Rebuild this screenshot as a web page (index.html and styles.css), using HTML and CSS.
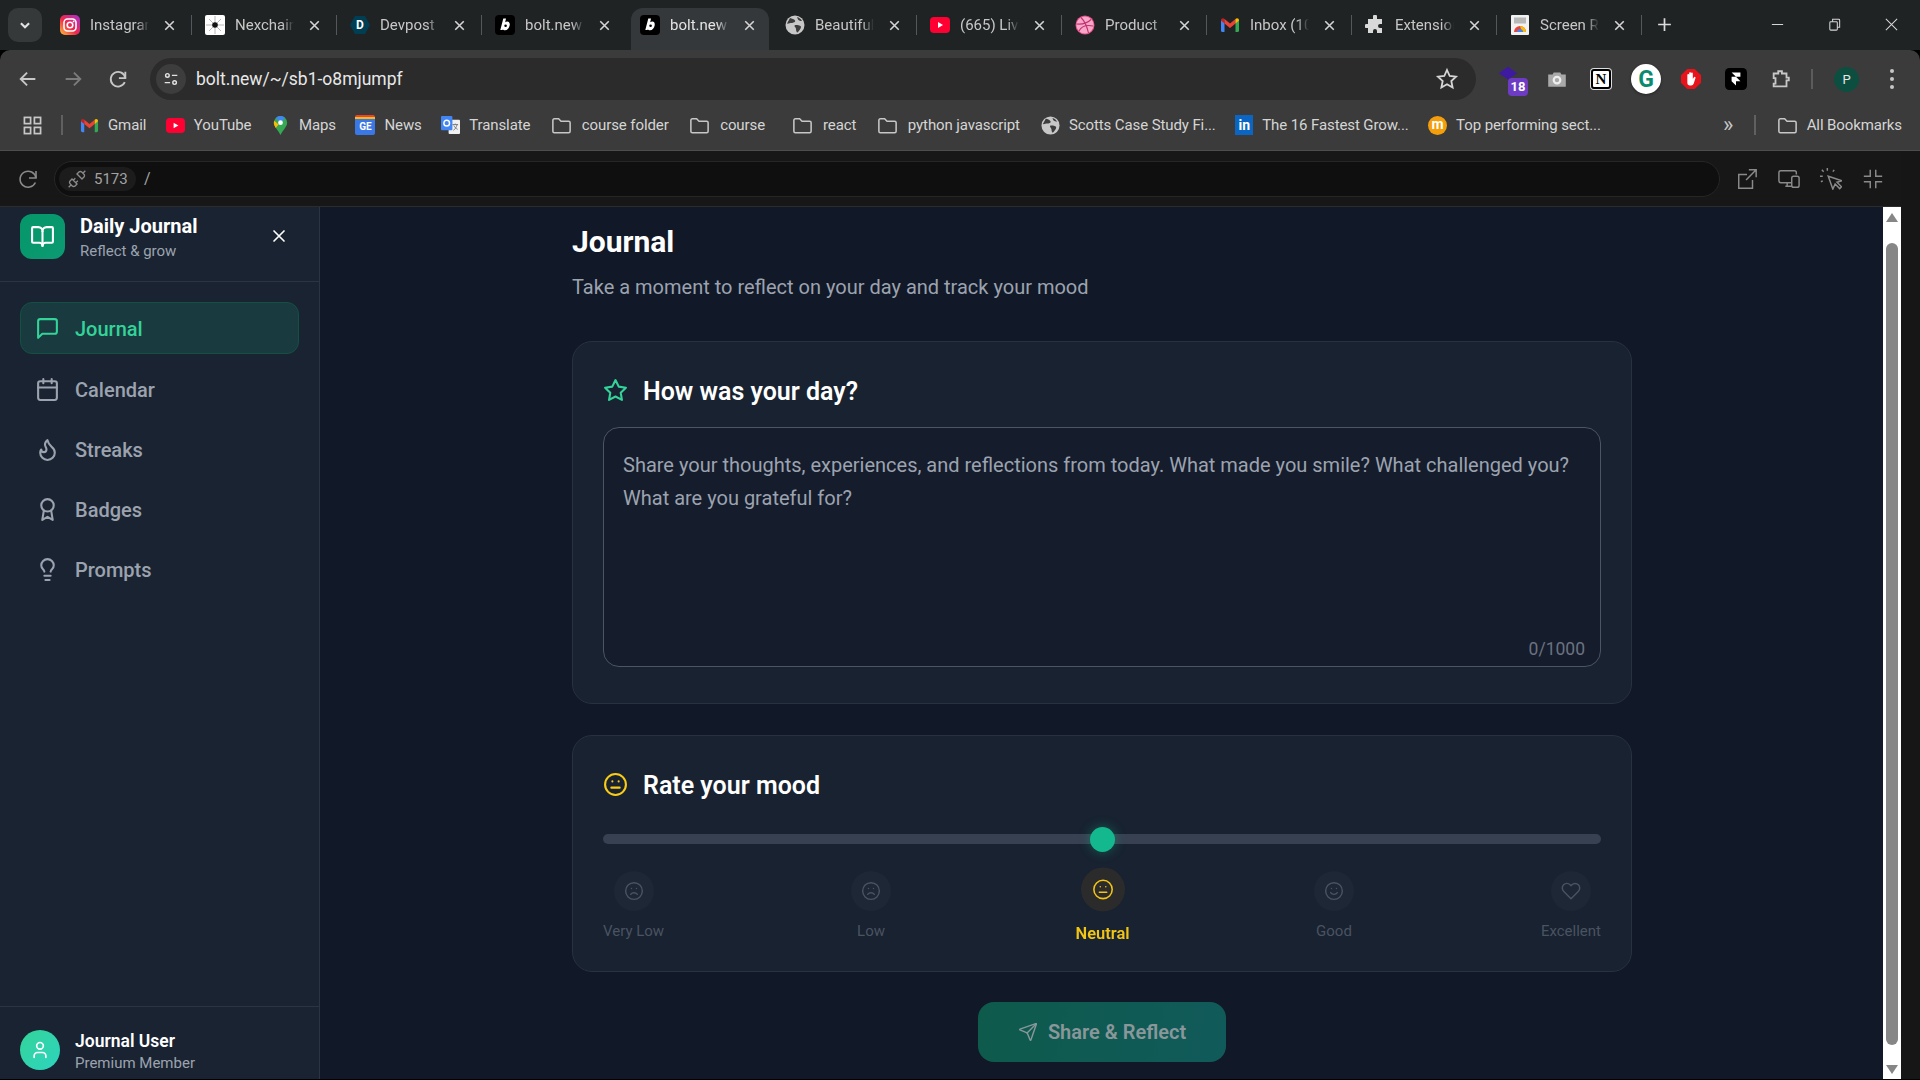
FILE: index.html
```html
<!DOCTYPE html>
<html lang="en">
<head>
  <meta charset="UTF-8" />
  <title>Daily Journal</title>
  <link rel="stylesheet" href="styles.css">
</head>
<body>

  <!-- icon sprite -->
  <svg class="sprite" xmlns="http://www.w3.org/2000/svg">
    <defs>
      <linearGradient id="igGrad" x1="0" y1="1" x2="1" y2="0">
        <stop offset="0" stop-color="#fdc13a"/><stop offset=".45" stop-color="#f0284a"/><stop offset="1" stop-color="#a92fd0"/>
      </linearGradient>
    </defs>
    <symbol id="i-x" viewBox="0 0 24 24"><path d="M18 6 6 18M6 6l12 12"/></symbol>
    <symbol id="i-book" viewBox="0 0 24 24"><path d="M12 7v14"/><path d="M3 18a1 1 0 0 1-1-1V4a1 1 0 0 1 1-1h5a4 4 0 0 1 4 4 4 4 0 0 1 4-4h5a1 1 0 0 1 1 1v13a1 1 0 0 1-1 1h-6a3 3 0 0 0-3 3 3 3 0 0 0-3-3z"/></symbol>
    <symbol id="i-message" viewBox="0 0 24 24"><path d="M21 15a2 2 0 0 1-2 2H7l-4 4V5a2 2 0 0 1 2-2h14a2 2 0 0 1 2 2z"/></symbol>
    <symbol id="i-calendar" viewBox="0 0 24 24"><path d="M8 2v4M16 2v4M3 10h18"/><rect x="3" y="4" width="18" height="18" rx="2"/></symbol>
    <symbol id="i-flame" viewBox="0 0 24 24"><path d="M8.5 14.5A2.5 2.5 0 0 0 11 12c0-1.38-.5-2-1-3-1.072-2.143-.224-4.054 2-6 .5 2.5 2 4.9 4 6.5 2 1.6 3 3.5 3 5.5a7 7 0 1 1-14 0c0-1.153.433-2.294 1-3a2.5 2.5 0 0 0 2.5 2.5z"/></symbol>
    <symbol id="i-award" viewBox="0 0 24 24"><circle cx="12" cy="8" r="6"/><path d="M15.477 12.89 17 22l-5-3-5 3 1.523-9.11"/></symbol>
    <symbol id="i-bulb" viewBox="0 0 24 24"><path d="M15 14c.2-1 .7-1.7 1.5-2.5 1-.9 1.5-2.2 1.5-3.5A6 6 0 0 0 6 8c0 1 .2 2.2 1.5 3.5.7.7 1.3 1.5 1.5 2.5"/><path d="M9 18h6M10 22h4"/></symbol>
    <symbol id="i-star" viewBox="0 0 24 24"><polygon points="12 2 15.09 8.26 22 9.27 17 14.14 18.18 21.02 12 17.77 5.82 21.02 7 14.14 2 9.27 8.91 8.26 12 2"/></symbol>
    <symbol id="i-meh" viewBox="0 0 24 24"><circle cx="12" cy="12" r="10"/><path d="M8 15h8M9 9h.01M15 9h.01"/></symbol>
    <symbol id="i-frown" viewBox="0 0 24 24"><circle cx="12" cy="12" r="10"/><path d="M16 16s-1.5-2-4-2-4 2-4 2M9 9h.01M15 9h.01"/></symbol>
    <symbol id="i-smile" viewBox="0 0 24 24"><circle cx="12" cy="12" r="10"/><path d="M8 14s1.5 2 4 2 4-2 4-2M9 9h.01M15 9h.01"/></symbol>
    <symbol id="i-heart" viewBox="0 0 24 24"><path d="M20.84 4.61a5.5 5.5 0 0 0-7.78 0L12 5.67l-1.06-1.06a5.5 5.5 0 0 0-7.78 7.78l1.06 1.06L12 21.23l7.78-7.78 1.06-1.06a5.5 5.5 0 0 0 0-7.78z"/></symbol>
    <symbol id="i-send" viewBox="0 0 24 24"><path d="M14.536 21.686a.5.5 0 0 0 .937-.024l6.5-19a.496.496 0 0 0-.635-.635l-19 6.5a.5.5 0 0 0-.024.937l7.93 3.18a2 2 0 0 1 1.112 1.11z"/><path d="m21.854 2.147-10.94 10.939"/></symbol>
    <symbol id="i-user" viewBox="0 0 24 24"><path d="M19 21v-2a4 4 0 0 0-4-4H9a4 4 0 0 0-4 4v2"/><circle cx="12" cy="7" r="4"/></symbol>
    <symbol id="i-folder" viewBox="0 0 24 24"><path d="M3 6.5A1.5 1.5 0 0 1 4.500 5H9l2.500 2.500h8A1.500 1.500 0 0 1 21 9v9a1.500 1.500 0 0 1-1.500 1.500h-15A1.500 1.500 0 0 1 3 18z"/></symbol>
    <symbol id="i-reload" viewBox="0 0 24 24"><path d="M20 11a8 8 0 1 0-.6 4.500"/><path d="M20 4v7h-7"/></symbol>

    <symbol id="f-insta" viewBox="0 0 20 20"><rect width="20" height="20" rx="5" fill="url(#igGrad)"/><rect x="4" y="4" width="12" height="12" rx="3.500" fill="none" stroke="#fff" stroke-width="1.600"/><circle cx="10" cy="10" r="2.800" fill="none" stroke="#fff" stroke-width="1.600"/><circle cx="13.600" cy="6.400" r=".9" fill="#fff"/></symbol>
    <symbol id="f-nex" viewBox="0 0 20 20"><rect width="20" height="20" rx="2" fill="#fff"/><path d="M10 1v18M1 10h18M4 4l12 12M16 4 4 16" stroke="#999" stroke-width=".7"/><circle cx="10" cy="10" r="2.800" fill="#111"/></symbol>
    <symbol id="f-dev" viewBox="0 0 20 20"><polygon points="5,1 15,1 20,10 15,19 5,19 0,10" fill="#003e54"/></symbol>
    <symbol id="f-bolt" viewBox="0 0 20 20"><rect width="20" height="20" rx="4" fill="#000"/><path d="M8.300 3.500h2.700l-.8 3.800c.6-.5 1.300-.7 2-.7 1.900 0 2.900 1.500 2.500 3.700-.5 2.900-2.300 5-4.700 5-1 0-1.800-.4-2.200-1.100l-.2.900H5.300z" fill="#fff"/><circle cx="10.600" cy="10.800" r="1.300" fill="#000"/></symbol>
    <symbol id="f-globe" viewBox="0 0 20 20"><circle cx="10" cy="10" r="9.500" fill="#c7c7c7"/><path d="M5 3c2 .5 4 1 5 2.500S8 8 6.500 8 3 9 2 8.500zM11 10c2 0 5 .5 5 2s-2 4-3.500 5.500c-1 0-1.500-2-1.500-3.500s-1.500-2-1.500-3 .5-1 1.500-1zM12 2c2 .5 4 2 5 4-1.500 0-3-.5-4-1.500z" fill="#3c3c3c"/></symbol>
    <symbol id="f-yt" viewBox="0 0 20 20"><rect y="2" width="20" height="16" rx="4" fill="#ff0033"/><path d="m8 7 5 3-5 3z" fill="#fff"/></symbol>
    <symbol id="f-drib" viewBox="0 0 20 20"><circle cx="10" cy="10" r="9.500" fill="#ea4c89"/><circle cx="10" cy="10" r="8.600" fill="#f7a8c8"/><path d="M6 2.500c3 3 6 9 7.500 15.500M1.500 9c5 .5 10 0 14.500-4.500M4 16c2-4 6-6.500 14-5" fill="none" stroke="#c2306f" stroke-width="1.100"/></symbol>
    <symbol id="f-gmail" viewBox="0 0 20 20"><path d="M1 5.500 4.500 4v13H2.500A1.500 1.500 0 0 1 1 15.500z" fill="#4285f4"/><path d="M19 5.500 15.500 4v13h2A1.500 1.500 0 0 0 19 15.500z" fill="#34a853"/><path d="M4.500 4 10 8.500 15.500 4v4.500L10 13 4.500 8.500z" fill="#ea4335"/><path d="M1 5.500C1 3.500 3 2.500 4.500 4v4.500L1 5.500z" fill="#c5221f"/><path d="M19 5.500c0-2-2-3-3.500-1.500v4.500z" fill="#fbbc04"/></symbol>
    <symbol id="f-puzzle" viewBox="0 0 20 20"><path d="M8 1.500a2 2 0 0 1 4 0V4h5v5h-2a2 2 0 0 0 0 4h2v5h-5v-2a2 2 0 0 0-4 0v2H3v-5H1.500a2 2 0 0 1 0-4H3V4h5z" fill="#d9d9d9"/></symbol>
    <symbol id="f-rec" viewBox="0 0 20 20"><rect x="1" y="0" width="18" height="20" rx="1" fill="#f1f1f1"/><rect x="4" y="2.500" width="12" height="6" fill="#b8b8b8"/><path d="M4 17a6 6 0 0 1 12 0z" fill="#ea4335"/><path d="M10 11a6 6 0 0 1 6 6h-4z" fill="#fbbc04"/><path d="M7 17a3 3 0 0 1 6 0z" fill="#4285f4"/></symbol>
  </svg>

  <!-- browser chrome -->
  <div class="tabstrip">
    <button class="tab-search"><svg viewBox="0 0 12 12"><path d="m2.500 4.500 3.500 3.500 3.500-3.500"/></svg></button>
    <div class="tabs">
      <div class="tab"><svg class="fav"><use href="#f-insta"/></svg><span class="tab-title">Instagram</span><svg class="tab-x"><use href="#i-x"/></svg></div>
      <div class="tab"><svg class="fav"><use href="#f-nex"/></svg><span class="tab-title">Nexchain</span><svg class="tab-x"><use href="#i-x"/></svg></div>
      <div class="tab"><span class="fav-dev"><svg class="fav"><use href="#f-dev"/></svg><b>D</b></span><span class="tab-title">Devpost</span><svg class="tab-x"><use href="#i-x"/></svg></div>
      <div class="tab no-sep"><svg class="fav"><use href="#f-bolt"/></svg><span class="tab-title">bolt.new</span><svg class="tab-x"><use href="#i-x"/></svg></div>
      <div class="tab active no-sep"><svg class="fav"><use href="#f-bolt"/></svg><span class="tab-title">bolt.new</span><svg class="tab-x"><use href="#i-x"/></svg></div>
      <div class="tab"><svg class="fav"><use href="#f-globe"/></svg><span class="tab-title">Beautiful</span><svg class="tab-x"><use href="#i-x"/></svg></div>
      <div class="tab"><svg class="fav"><use href="#f-yt"/></svg><span class="tab-title">(665) Live</span><svg class="tab-x"><use href="#i-x"/></svg></div>
      <div class="tab"><svg class="fav"><use href="#f-drib"/></svg><span class="tab-title">Product</span><svg class="tab-x"><use href="#i-x"/></svg></div>
      <div class="tab"><svg class="fav"><use href="#f-gmail"/></svg><span class="tab-title">Inbox (10</span><svg class="tab-x"><use href="#i-x"/></svg></div>
      <div class="tab"><svg class="fav"><use href="#f-puzzle"/></svg><span class="tab-title">Extension</span><svg class="tab-x"><use href="#i-x"/></svg></div>
      <div class="tab"><svg class="fav"><use href="#f-rec"/></svg><span class="tab-title">Screen R</span><svg class="tab-x"><use href="#i-x"/></svg></div>
    </div>
    <svg class="new-tab" viewBox="0 0 16 16"><path d="M8 2v12M2 8h12"/></svg>
    <div class="win-controls">
      <svg viewBox="0 0 16 16"><path d="M2 8h12"/></svg>
      <svg viewBox="0 0 16 16"><rect x="3" y="5" width="8" height="9" rx="1"/><path d="M6 5V2.500h6.500A1 1 0 0 1 13.500 3.500V11H11"/></svg>
      <svg viewBox="0 0 16 16"><path d="M2 2l12 12M14 2 2 14"/></svg>
    </div>
  </div>

  <div class="toolbar">
    <svg class="tool-icon back" viewBox="0 0 24 24"><path d="M20 12H5M11 5l-7 7 7 7"/></svg>
    <svg class="tool-icon fwd" viewBox="0 0 24 24"><path d="M4 12h15M13 5l7 7-7 7"/></svg>
    <svg class="tool-icon reload"><use href="#i-reload"/></svg>
    <div class="omnibox">
      <span class="site-info"><svg viewBox="0 0 20 20"><circle cx="6" cy="6" r="2"/><path d="M11 6h6M3 14h6"/><circle cx="14" cy="14" r="2"/></svg></span>
      <span class="url">bolt.new/~/sb1-o8mjumpf</span>
      <svg class="star" viewBox="0 0 24 24"><polygon points="12 3 14.700 9 21 9.700 16.300 14 17.600 20.500 12 17.200 6.400 20.500 7.700 14 3 9.700 9.300 9"/></svg>
    </div>
    <div class="extensions">
      <span class="ext ext-grad"><svg viewBox="0 0 24 20"><path d="M12 1 22 8 12 15 2 8z" fill="#3d1aa0"/></svg><b>18</b></span>
      <span class="ext"><svg viewBox="0 0 20 20"><path d="M2 6h4l1-2h6l1 2h4v11H2z" fill="#a9a9a9"/><circle cx="10" cy="11" r="3" fill="none" stroke="#eee" stroke-width="2"/></svg></span>
      <span class="ext ext-notion">N</span>
      <span class="ext ext-gram">G</span>
      <span class="ext"><svg viewBox="0 0 24 24"><polygon points="8 1 16 1 23 8 23 16 16 23 8 23 1 16 1 8" fill="#e8141b"/><path d="M8 13V7.500a1 1 0 0 1 2 0V11V5.500a1 1 0 0 1 2 0V11V6a1 1 0 0 1 2 0v6l1.200-2a1 1 0 0 1 1.700 1L15 17a3 3 0 0 1-3 2h-1a3 3 0 0 1-3-3z" fill="#fff"/></svg></span>
      <span class="ext"><svg viewBox="0 0 20 20"><rect width="20" height="20" rx="4" fill="#000"/><path d="M6 4h8v4h-4zM6 8h4l4 4H6zM6 12h4v4z" fill="#fff"/></svg></span>
      <span class="ext"><svg viewBox="0 0 24 24" fill="none" stroke="#c7c7c7" stroke-width="2"><path d="M4 6h5V3.500h4V6h5v4.500h2.500v3H18V20H4v-3h2v-6H4z"/></svg></span>
      <span class="tool-sep"></span>
      <span class="avatar-p">P</span>
      <span class="dots"><i></i><i></i><i></i></span>
    </div>
  </div>

  <div class="bookmarks">
    <svg class="bm-apps" viewBox="0 0 20 20"><rect x="1.500" y="1.500" width="6.500" height="6.500"/><rect x="12" y="1.500" width="6.500" height="6.500"/><rect x="1.500" y="12" width="6.500" height="6.500"/><rect x="12" y="12" width="6.500" height="6.500"/></svg>
    <span class="bm-sep"></span>
    <a class="bm"><svg class="bm-fav"><use href="#f-gmail"/></svg>Gmail</a>
    <a class="bm"><svg class="bm-fav"><use href="#f-yt"/></svg>YouTube</a>
    <a class="bm"><svg class="bm-fav" viewBox="0 0 20 20"><path d="M10 0a7 7 0 0 1 7 7c0 4-4 7-7 13-3-6-7-9-7-13a7 7 0 0 1 7-7z" fill="#34a853"/><path d="M5 2.200A7 7 0 0 1 15 2.200L10 7z" fill="#4285f4"/><path d="M3.500 5 8 9l-3 3.500C4 11 3 9 3 7z" fill="#fbbc04"/><circle cx="10" cy="7" r="2.500" fill="#fff"/></svg>Maps</a>
    <a class="bm"><span class="news-fav"><b>GE</b></span>News</a>
    <a class="bm"><svg class="bm-fav" viewBox="0 0 20 20"><rect x="8" y="4" width="12" height="15" rx="1" fill="#f1f1f1"/><rect x="0" y="0" width="12" height="15" rx="1" fill="#4285f4"/><path d="M12 9h6M15 8v1M13 15c2-1 3-3 4-6M13.500 10c1 2 2 3 4 4" stroke="#777" stroke-width="1" fill="none"/><circle cx="6" cy="7.500" r="3" fill="none" stroke="#fff" stroke-width="1.500"/></svg>Translate</a>
    <a class="bm"><svg class="bm-folder"><use href="#i-folder"/></svg>course folder</a>
    <a class="bm gap-l"><svg class="bm-folder"><use href="#i-folder"/></svg>course</a>
    <a class="bm"><svg class="bm-folder"><use href="#i-folder"/></svg>react</a>
    <a class="bm gap-m"><svg class="bm-folder"><use href="#i-folder"/></svg>python javascript</a>
    <a class="bm"><svg class="bm-fav"><use href="#f-globe"/></svg>Scotts Case Study Fi...</a>
    <a class="bm"><span class="in-fav">in</span>The 16 Fastest Grow...</a>
    <a class="bm"><span class="m-fav">m</span>Top performing sect...</a>
    <span class="bm-more">»</span>
    <span class="bm-sep sep-right"></span>
    <a class="bm all"><svg class="bm-folder"><use href="#i-folder"/></svg>All Bookmarks</a>
  </div>

  <div class="lower">
    <div class="workspace">
      <!-- preview bar -->
      <div class="previewbar">
        <svg class="pv-reload"><use href="#i-reload"/></svg>
        <div class="pv-input">
          <span class="port"><svg viewBox="0 0 24 24"><path d="m19 5 3-3M2 22l3-3M6.300 20.300a2.400 2.400 0 0 0 3.400 0L12 18l-6-6-2.300 2.300a2.400 2.400 0 0 0 0 3.400zM7.500 13.500 10 11M10.500 16.500 13 14M12 6l6 6 2.300-2.300a2.400 2.400 0 0 0 0-3.400l-2.600-2.600a2.400 2.400 0 0 0-3.400 0z"/></svg>5173</span>
          <span class="pv-path">/</span>
        </div>
        <div class="pv-actions">
          <svg viewBox="0 0 24 24"><path d="M14 2h8v8M22 2 11 13M18 13v9H3V7h9"/></svg>
          <svg viewBox="0 0 24 24"><path d="M15 16H3a2 2 0 0 1-2-2V5a2 2 0 0 1 2-2h15a2 2 0 0 1 2 2v2M8 20h7M10 16v4"/><rect x="15" y="9" width="8" height="12" rx="2"/></svg>
          <svg viewBox="0 0 24 24"><path d="M9 9l5 14 2.500-5.500 5 5 2-2-5-5L24 14zM3 9H0M8 3V0M4 4 2 2M14 4l1.500-2M3 14l-2 1"/></svg>
          <svg viewBox="0 0 24 24"><path d="M9 2v7H2M15 2v7h7M9 22v-7H2M15 22v-7h7"/></svg>
        </div>
      </div>

      <div class="app">
        <aside class="sidebar">
          <div class="side-head">
            <span class="logo"><svg class="ic"><use href="#i-book"/></svg></span>
            <div class="brand">
              <h1>Daily Journal</h1>
              <p>Reflect &amp; grow</p>
            </div>
            <svg class="ic side-close"><use href="#i-x"/></svg>
          </div>
          <nav class="side-nav">
            <a class="nav-item active"><svg class="ic"><use href="#i-message"/></svg>Journal</a>
            <a class="nav-item"><svg class="ic"><use href="#i-calendar"/></svg>Calendar</a>
            <a class="nav-item"><svg class="ic"><use href="#i-flame"/></svg>Streaks</a>
            <a class="nav-item"><svg class="ic"><use href="#i-award"/></svg>Badges</a>
            <a class="nav-item"><svg class="ic"><use href="#i-bulb"/></svg>Prompts</a>
          </nav>
          <div class="side-foot">
            <span class="avatar"><svg class="ic"><use href="#i-user"/></svg></span>
            <div class="user">
              <strong>Journal User</strong>
              <span>Premium Member</span>
            </div>
          </div>
        </aside>

        <main class="main">
          <div class="content">
            <h2 class="page-title">Journal</h2>
            <p class="page-sub">Take a moment to reflect on your day and track your mood</p>

            <section class="card card-entry">
              <h3 class="card-title"><svg class="ic star-ic"><use href="#i-star"/></svg>How was your day?</h3>
              <div class="entry">
                <p class="placeholder">Share your thoughts, experiences, and reflections from today. What made you smile? What challenged you? What are you grateful for?</p>
                <span class="count">0/1000</span>
              </div>
            </section>

            <section class="card card-mood">
              <h3 class="card-title"><svg class="ic meh-ic"><use href="#i-meh"/></svg>Rate your mood</h3>
              <div class="slider"><span class="thumb"></span></div>
              <div class="moods">
                <div class="mood"><span class="mood-ic"><svg class="ic"><use href="#i-frown"/></svg></span><span>Very Low</span></div>
                <div class="mood"><span class="mood-ic"><svg class="ic"><use href="#i-frown"/></svg></span><span>Low</span></div>
                <div class="mood selected"><span class="mood-ic"><svg class="ic"><use href="#i-meh"/></svg></span><span>Neutral</span></div>
                <div class="mood"><span class="mood-ic"><svg class="ic"><use href="#i-smile"/></svg></span><span>Good</span></div>
                <div class="mood"><span class="mood-ic"><svg class="ic"><use href="#i-heart"/></svg></span><span>Excellent</span></div>
              </div>
            </section>

            <button class="share"><svg class="ic"><use href="#i-send"/></svg>Share &amp; Reflect</button>
          </div>
        </main>

        <div class="scrollbar">
          <span class="arrow up"></span>
          <span class="scroll-thumb"></span>
          <span class="arrow down"></span>
        </div>
      </div>
    </div>
    <div class="edge"></div>
  </div>

</body>
</html>
```

FILE: styles.css
```css
/* Reset */
* {
  margin: 0; padding: 0; box-sizing: border-box;
  font-family: Roboto, 'Noto Sans', sans-serif;
}

html, body {
  width: 1920px;
  height: 1080px;
  overflow: hidden;
  background: #000;
}

.sprite {
  width: 0;
  height: 0;
  display: block;
}

.ic {
  fill: none;
  stroke: currentColor;
  stroke-width: 2;
  stroke-linecap: round;
  stroke-linejoin: round;
}

/* Tab strip */
.tabstrip {
  height: 50px;
  background: #202324;
  display: flex;
  align-items: flex-start;
  padding-left: 8px;
}
.tab-search {
  width: 34px;
  height: 34px;
  margin-top: 8px;
  border: none;
  border-radius: 10px;
  background: #36393a;
  display: flex;
  align-items: center;
  justify-content: center;
}
.tab-search svg {
  width: 14px;
  height: 14px;
  fill: none;
  stroke: #e3e3e3;
  stroke-width: 1.8;
}
.tabs {
  display: flex;
  margin-left: 5px;
}
.tab {
  width: 145px;
  height: 42px;
  margin-top: 8px;
  padding: 0 0 8px 13px;
  display: flex;
  align-items: center;
  color: #c7c7c7;
  font-size: 15px;
  position: relative;
}
.tab::after {
  content: "";
  position: absolute;
  right: 0;
  top: 7px;
  height: 20px;
  width: 1.5px;
  background: #55585a;
}
.tab.no-sep::after { display: none; }
.tab:nth-child(3)::after { display: block; }
.tab:nth-child(4)::after { display: none; }
.tab.active {
  background: #35383a;
  border-radius: 12px 12px 0 0;
  color: #e3e3e3;
  margin-left: 4px;
  margin-right: 3px;
  width: 138px;
  padding-left: 9px;
}
.fav {
  width: 20px;
  height: 20px;
  flex-shrink: 0;
}
.fav-dev {
  position: relative;
  width: 20px;
  height: 20px;
  flex-shrink: 0;
}
.fav-dev b {
  position: absolute;
  inset: 0;
  color: #fff;
  font-size: 12px;
  text-align: center;
  line-height: 20px;
}
.tab-title {
  width: 59px;
  margin-left: 10px;
  white-space: nowrap;
  overflow: hidden;
  -webkit-mask-image: linear-gradient(90deg, #000 80%, transparent);
  mask-image: linear-gradient(90deg, #000 80%, transparent);
}
.tab-x {
  width: 17px;
  height: 17px;
  margin-left: 12px;
  fill: none;
  stroke: #d5d5d5;
  stroke-width: 2.2;
}
.new-tab {
  width: 17px;
  height: 17px;
  margin: 16px 0 0 14px;
  fill: none;
  stroke: #dcdcdc;
  stroke-width: 1.6;
}
.win-controls {
  margin-left: auto;
  display: flex;
  gap: 42px;
  padding: 17px 21px 0 0;
}
.win-controls svg {
  width: 15px;
  height: 15px;
  fill: none;
  stroke: #d6d6d6;
  stroke-width: 1.1;
}

/* Toolbar */
.toolbar {
  height: 50px;
  background: #3b3b3b;
  border-radius: 10px 10px 0 0;
  display: flex;
  align-items: flex-start;
  position: relative;
}
.tool-icon {
  width: 22px;
  height: 22px;
  margin-top: 18px;
  fill: none;
  stroke: #c7c7c7;
  stroke-width: 2;
  flex-shrink: 0;
}
.tool-icon.back { margin-left: 17px; }
.tool-icon.fwd { margin-left: 23px; stroke: #7c7c7c; }
.tool-icon.reload { margin-left: 23px; }
.omnibox {
  width: 1326px;
  height: 42px;
  margin: 8px 0 0 21px;
  border-radius: 21px;
  background: #2b2b2b;
  display: flex;
  align-items: center;
  padding: 0 17px 0 6px;
}
.site-info {
  width: 30px;
  height: 30px;
  border-radius: 50%;
  background: #3d3d3d;
  display: flex;
  align-items: center;
  justify-content: center;
}
.site-info svg {
  width: 18px;
  height: 18px;
  fill: none;
  stroke: #e3e3e3;
  stroke-width: 1.6;
}
.url {
  margin-left: 10px;
  font-size: 17.5px;
  color: #e8e8e8;
}
.star {
  width: 24px;
  height: 24px;
  margin-left: auto;
  fill: none;
  stroke: #d6d6d6;
  stroke-width: 1.8;
}
.extensions {
  display: flex;
  align-items: center;
  margin-top: 8px;
  height: 42px;
  margin-left: 21px;
}
.ext {
  width: 30px;
  height: 30px;
  margin-right: 15px;
  display: flex;
  align-items: center;
  justify-content: center;
  position: relative;
  flex-shrink: 0;
}
.ext svg { width: 22px; height: 22px; }
.ext-grad svg { width: 22px; margin: -8px 8px 0 0; }
.ext-grad b {
  position: absolute;
  right: -1px;
  bottom: -2px;
  width: 20px;
  height: 18px;
  border-radius: 4px;
  background: #6e3cc4;
  color: #fff;
  font-size: 13px;
  line-height: 18px;
  text-align: center;
}
.ext-notion {
  width: 20px;
  height: 20px;
  margin: 0 20px 0 4px;
  background: #fff;
  border: 2px solid #000;
  border-radius: 3px;
  color: #000;
  font-family: 'Liberation Serif', serif;
  font-size: 15px;
  font-weight: 700;
  box-shadow: 0 0 0 1px #ddd;
}
.ext-gram {
  background: #fff;
  border-radius: 50%;
  border: 4px solid #fff;
  color: #0b8a70;
  font-size: 23px;
  font-weight: 700;
  box-shadow: 0 1px 3px rgba(0,0,0,.4);
}
.tool-sep {
  width: 2px;
  height: 20px;
  background: #5c5c5c;
  margin: 0 21px 0 0;
}
.avatar-p {
  width: 25px;
  height: 25px;
  border-radius: 50%;
  background: #0c4f40;
  color: #e6e6e6;
  font-size: 13px;
  text-align: center;
  line-height: 25px;
}
.dots {
  display: flex;
  flex-direction: column;
  gap: 4px;
  margin-left: 31px;
}
.dots i {
  width: 4px;
  height: 4px;
  border-radius: 50%;
  background: #c7c7c7;
}

/* Bookmarks */
.bookmarks {
  height: 51px;
  background: #3b3b3b;
  border-bottom: 1px solid #4d4d4d;
  display: flex;
  align-items: center;
  padding: 0 0 0 23px;
  color: #d5d5d5;
  font-size: 15px;
  letter-spacing: -0.1px;
}
.bm-apps {
  width: 19px;
  height: 19px;
  fill: none;
  stroke: #c7c7c7;
  stroke-width: 1.8;
}
.bm-sep {
  width: 1.5px;
  height: 20px;
  background: #606060;
  margin: 0 17.5px 0 19px;
}
.bm {
  display: flex;
  align-items: center;
  gap: 9px;
  margin-right: 19.5px;
  white-space: nowrap;
}
.bm.gap-l { margin-right: 26px; }
.bm.gap-m { margin-right: 21px; }
.bm-fav {
  width: 19px;
  height: 19px;
  flex-shrink: 0;
}
.bm-folder {
  width: 23px;
  height: 23px;
  fill: none;
  stroke: #c7c7c7;
  stroke-width: 1.6;
  flex-shrink: 0;
}
.news-fav {
  width: 20px;
  height: 20px;
  background: linear-gradient(#ea4335 0 12%, #fbbc04 12% 22%, #3b78e7 22%);
  border-radius: 2px;
  color: #fff;
  font-size: 10px;
  line-height: 24px;
  text-align: center;
}
.in-fav {
  width: 18px;
  height: 20px;
  background: #0a66c2;
  color: #fff;
  font-size: 14px;
  font-weight: 700;
  line-height: 20px;
  text-align: center;
}
.m-fav {
  width: 19px;
  height: 19px;
  border-radius: 50%;
  background: #f59e0b;
  color: #fff;
  font-size: 14px;
  font-weight: 700;
  line-height: 17px;
  text-align: center;
}
.bm-more {
  margin-left: auto;
  font-size: 22px;
  line-height: 22px;
  color: #c7c7c7;
}
.sep-right { margin: 0 20px 0 21px; }
.bm.all { margin-right: 18px; gap: 8px; }

/* Layout below chrome */
.lower {
  height: 928px;
  display: flex;
}
.workspace {
  width: 1901px;
  display: flex;
  flex-direction: column;
}
.edge {
  flex: 1;
  background: #161616;
}

/* Preview bar */
.previewbar {
  height: 56px;
  background: #171717;
  border-bottom: 1px solid #2c2c2c;
  display: flex;
  align-items: center;
  padding-left: 16px;
  flex-shrink: 0;
}
.pv-reload {
  width: 24px;
  height: 24px;
  fill: none;
  stroke: #8a8a8a;
  stroke-width: 1.6;
}
.pv-input {
  width: 1666px;
  height: 36px;
  margin-left: 14px;
  background: #0f0f0f;
  border: 1px solid #262626;
  border-radius: 18px;
  display: flex;
  align-items: center;
  padding-left: 4px;
}
.port {
  width: 77px;
  height: 24px;
  padding-left: 8px;
  border-radius: 12px;
  background: #1c1c1c;
  display: flex;
  align-items: center;
  gap: 7px;
  color: #a3a3a3;
  font-size: 15px;
}
.port svg {
  width: 20px;
  height: 20px;
  fill: none;
  stroke: #8a8a8a;
  stroke-width: 1.6;
}
.pv-path {
  margin-left: 8px;
  color: #a3a3a3;
  font-size: 16px;
}
.pv-actions {
  display: flex;
  gap: 20px;
  margin-left: 16px;
}
.pv-actions svg {
  width: 22px;
  height: 22px;
  fill: none;
  stroke: #8a8a8a;
  stroke-width: 1.6;
}

/* App */
.app {
  flex: 1;
  display: flex;
  min-height: 0;
  background: #111827;
}

/* Sidebar */
.sidebar {
  width: 320px;
  background: #1a2332;
  border-right: 1px solid #2a3443;
  display: flex;
  flex-direction: column;
}
.side-head {
  height: 75px;
  padding: 7px 20px 0;
  border-bottom: 1px solid #2a3443;
  display: flex;
  align-items: flex-start;
}
.logo {
  width: 45px;
  height: 45px;
  border-radius: 12px;
  background: linear-gradient(135deg, #059669, #0c9a72);
  color: #fff;
  display: flex;
  align-items: center;
  justify-content: center;
}
.logo svg { width: 25px; height: 25px; }
.brand { margin-left: 15px; }
.brand h1 {
  font-size: 20px;
  font-weight: 700;
  line-height: 27px;
  color: #fff;
  margin-top: -1px;
}
.brand p {
  font-size: 15px;
  line-height: 21px;
  color: #9ca3af;
  margin-top: 1px;
}
.side-close {
  width: 20px;
  height: 20px;
  margin: 12px 10px 0 auto;
  color: #fff;
}
.side-nav {
  padding: 20px 20px 0;
  display: flex;
  flex-direction: column;
  gap: 10px;
}
.nav-item {
  height: 50px;
  padding: 2px 0 0 14px;
  border: 1px solid transparent;
  border-radius: 12px;
  display: flex;
  align-items: center;
  gap: 15px;
  font-size: 20px;
  font-weight: 500;
  color: #9ca3af;
}
.nav-item svg { width: 25px; height: 25px; margin-top: -2px; }
.nav-item.active {
  height: 52px;
  background: #193a3f;
  border-color: #135045;
  color: #34d399;
}
.side-foot {
  margin-top: auto;
  height: 73px;
  padding: 23px 20px 0;
  border-top: 1px solid #2a3443;
  display: flex;
  align-items: flex-start;
}
.avatar {
  width: 40px;
  height: 40px;
  border-radius: 50%;
  background: linear-gradient(135deg, #34d399, #2dd4bf);
  color: #fff;
  display: flex;
  align-items: center;
  justify-content: center;
}
.avatar svg { width: 20px; height: 20px; }
.user {
  margin-left: 15px;
  display: flex;
  flex-direction: column;
  margin-top: -1px;
}
.user strong {
  font-size: 17.5px;
  font-weight: 600;
  line-height: 24px;
  color: #fff;
}
.user span {
  font-size: 15px;
  line-height: 20px;
  color: #9ca3af;
}

/* Main content */
.main {
  flex: 1;
  display: flex;
  justify-content: center;
  min-width: 0;
  padding-left: 1px;
}
.content {
  width: 1060px;
  padding-top: 16px;
  display: flex;
  flex-direction: column;
}
.page-title {
  font-size: 30px;
  font-weight: 700;
  line-height: 38px;
  color: #fff;
}
.page-sub {
  font-size: 20px;
  line-height: 30px;
  margin: 11px 0 39px;
  color: #9ca3af;
}
.card {
  background: #182230;
  border: 1px solid #273140;
  border-radius: 20px;
  padding: 31px 30px 36px;
}
.card-mood {
  margin-top: 31px;
  padding-bottom: 29px;
}
.card-title {
  height: 36px;
  padding-top: 1px;
  display: flex;
  align-items: center;
  gap: 15px;
  font-size: 25px;
  font-weight: 600;
  color: #fff;
}
.card-title svg { width: 25px; height: 25px; margin-top: -2px; }
.star-ic { color: #34d399; }
.meh-ic { color: #facc15; }
.entry {
  height: 240px;
  margin-top: 18px;
  background: #151c2c;
  border: 1px solid #4b5563;
  border-radius: 16px;
  padding: 21px 19px;
  position: relative;
}
.placeholder {
  font-size: 20px;
  line-height: 33px;
  color: #9ca3af;
}
.count {
  position: absolute;
  right: 15px;
  bottom: 7px;
  font-size: 17.5px;
  color: #6b7280;
}
.slider {
  height: 10px;
  margin-top: 31px;
  border-radius: 5px;
  background: #374151;
  position: relative;
}
.thumb {
  position: absolute;
  left: 50%;
  top: 50%;
  width: 25px;
  height: 25px;
  margin: -12.5px 0 0 -12.5px;
  border-radius: 50%;
  background: #14b88f;
  box-shadow: 0 0 12px rgba(20,184,143,.4);
}
.moods {
  margin-top: 27px;
  display: flex;
  justify-content: space-between;
}
.mood {
  display: flex;
  flex-direction: column;
  align-items: center;
  gap: 10px;
  font-size: 15px;
  line-height: 21px;
  color: #4a5361;
}
.mood-ic {
  width: 40px;
  height: 40px;
  border-radius: 50%;
  background: #1e2735;
  display: flex;
  align-items: center;
  justify-content: center;
}
.mood-ic svg { width: 20px; height: 20px; stroke-width: 1.7; }
.mood.selected {
  transform: scale(1.1);
  color: #f2c414;
  font-weight: 600;
}
.mood.selected .mood-ic { background: #2c2b2c; }
.share {
  width: 248px;
  height: 60px;
  margin: 30px auto 0;
  border: none;
  border-radius: 16px;
  background: linear-gradient(100deg, #0e5a4b, #115a5b);
  color: #89979a;
  font-size: 20px;
  font-weight: 600;
  display: flex;
  align-items: center;
  justify-content: center;
  gap: 10px;
}
.share svg { width: 20px; height: 20px; stroke-width: 1.7; }

/* Scrollbar */
.scrollbar {
  width: 18px;
  background: #fff;
  position: relative;
  display: flex;
  flex-direction: column;
  align-items: center;
}
.scroll-thumb {
  width: 12px;
  height: 802px;
  margin-top: 21px;
  border-radius: 6px;
  background: #868686;
}
.arrow {
  width: 0;
  height: 0;
  border-left: 6px solid transparent;
  border-right: 6px solid transparent;
}
.arrow.up {
  margin-top: 6px;
  border-bottom: 9px solid #868686;
}
.arrow.down {
  margin-top: 20px;
  border-top: 9px solid #868686;
}
```
